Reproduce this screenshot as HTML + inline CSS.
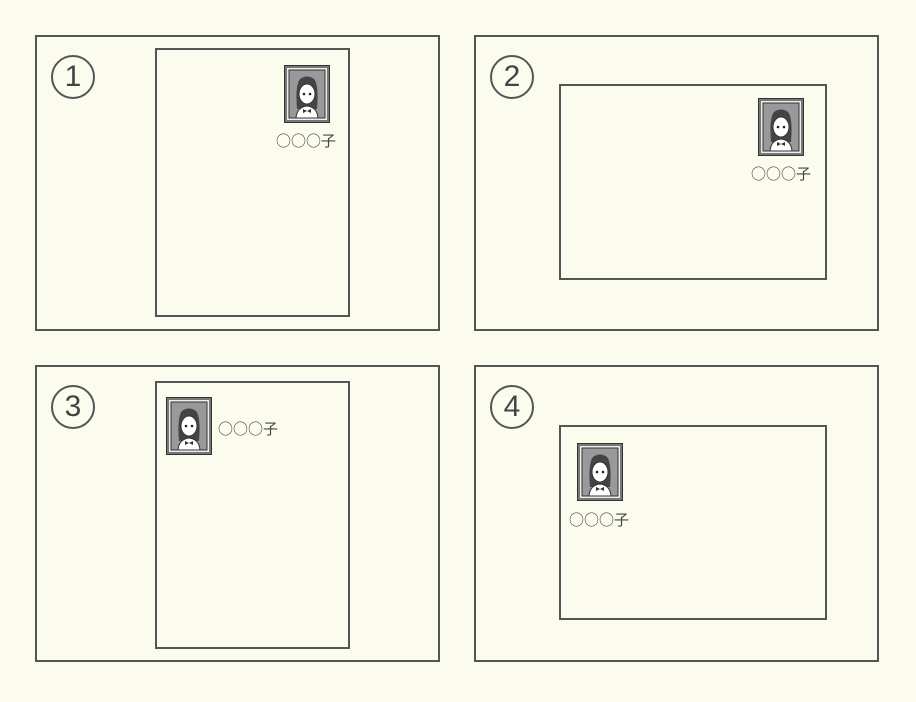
<!DOCTYPE html>
<html><head><meta charset="utf-8"><style>
body{margin:0;width:916px;height:702px;background:#fcfcee;position:relative;overflow:hidden;font-family:"Liberation Sans","Noto Sans CJK JP",sans-serif}
.b{position:absolute;border:2px solid #555;box-sizing:border-box}
.c{position:absolute;width:44px;height:44px;border:2px solid #555;border-radius:50%;box-sizing:border-box;text-align:center;line-height:40px;font-size:30px;color:#444}
.t{position:absolute;font-family:"Noto Sans CJK JP",sans-serif;font-size:15px;line-height:18px;color:#444;letter-spacing:0}
.p{position:absolute;width:46px;height:58px}
</style></head><body>
<svg width="0" height="0" style="position:absolute"><defs>
<symbol id="ph" viewBox="0 0 46 58">
<rect x="0.5" y="0.5" width="45" height="57" fill="#777" stroke="#333"/>
<rect x="3" y="3" width="40" height="52" fill="#eee"/>
<rect x="5" y="5" width="36" height="48" fill="#999" stroke="#333" stroke-width="1"/>
<path d="M13 44 Q11 20 16 14 Q23 9 30 14 Q35 20 33 44 Z" fill="#444"/>
<path d="M12 53 Q13 42 23 41 Q33 42 34 53 Z" fill="#fff" stroke="#333"/>
<ellipse cx="23" cy="29" rx="8" ry="10" fill="#fff" stroke="#333"/>
<path d="M15 24 Q20 16 27 19 Q30 22 31 25 L31 18 Q23 12 15 19Z" fill="#444"/>
<circle cx="20" cy="29" r="1.3" fill="#222"/><circle cx="26" cy="29" r="1.3" fill="#222"/>
<path d="M19 44 L23 46 L27 44 L27 48 L23 46 L19 48Z" fill="#333"/>
</symbol></defs></svg>

<div class="b" style="left:35px;top:35px;width:405px;height:296px"></div>
<div class="c" style="left:51px;top:55px">1</div>
<div class="b" style="left:155px;top:48px;width:195px;height:269px"></div>
<svg class="p" style="left:284px;top:65px"><use href="#ph"/></svg>
<div class="t" style="left:276px;top:132px">○○○子</div>

<div class="b" style="left:474px;top:35px;width:405px;height:296px"></div>
<div class="c" style="left:490px;top:55px">2</div>
<div class="b" style="left:559px;top:84px;width:268px;height:196px"></div>
<svg class="p" style="left:758px;top:98px"><use href="#ph"/></svg>
<div class="t" style="left:751px;top:165px">○○○子</div>

<div class="b" style="left:35px;top:365px;width:405px;height:297px"></div>
<div class="c" style="left:51px;top:385px">3</div>
<div class="b" style="left:155px;top:381px;width:195px;height:268px"></div>
<svg class="p" style="left:166px;top:397px"><use href="#ph"/></svg>
<div class="t" style="left:218px;top:420px">○○○子</div>

<div class="b" style="left:474px;top:365px;width:405px;height:297px"></div>
<div class="c" style="left:490px;top:385px">4</div>
<div class="b" style="left:559px;top:425px;width:268px;height:195px"></div>
<svg class="p" style="left:577px;top:443px"><use href="#ph"/></svg>
<div class="t" style="left:569px;top:511px">○○○子</div>
</body></html>
